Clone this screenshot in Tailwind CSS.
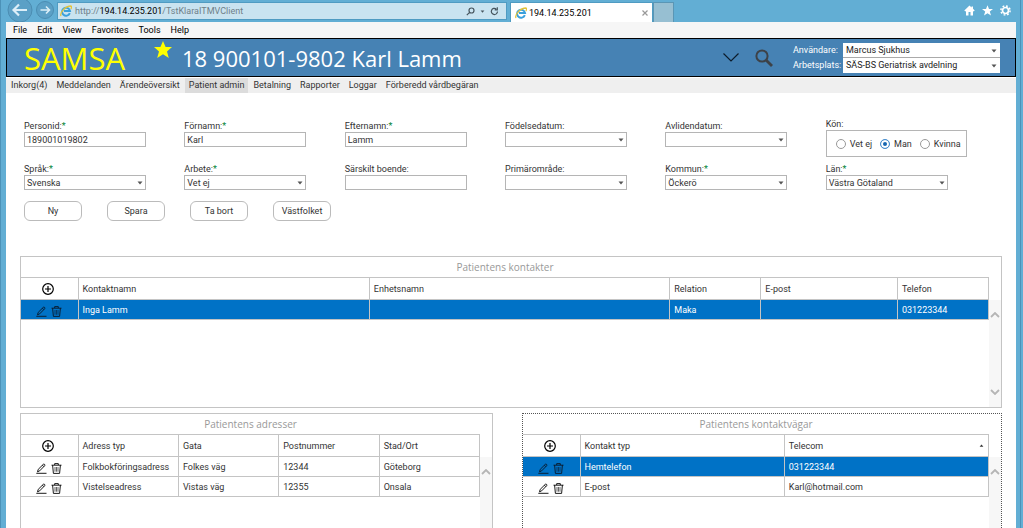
<!DOCTYPE html>
<html lang="sv">
<head>
    <meta charset="UTF-8">
    <meta name="viewport" content="width=device-width, initial-scale=1.0">
    <title>SAMSA - Patient admin</title>
    <script src="https://cdn.jsdelivr.net/npm/@tailwindcss/browser@4"></script>
</head>
<body class="h-screen overflow-hidden bg-[#62aed4] pr-[2px] font-[Roboto,sans-serif] text-[9px] leading-3 text-[#333]">

    <!-- Shared icons -->
    <svg class="hidden">
        <symbol id="ie" viewBox="0 0 12 12">
            <path d="M9.8 8.2A4 4 0 1 1 10 6H4" fill="none" stroke="#3aa0dc" stroke-width="2"/>
            <path d="M1 11C-.5 8 5 1 11 1c1 .5 .6 2-.2 3" fill="none" stroke="#e3c33a" stroke-width="1.3"/>
        </symbol>
        <symbol id="caret" viewBox="0 0 6 4"><path d="M.5 .5h5L3 3.5z" fill="currentColor"/></symbol>
        <symbol id="plus" viewBox="0 0 12 12">
            <path d="M6 .7a5.3 5.3 0 1 1 0 10.6a5.3 5.3 0 0 1 0-10.6zM6 3v6M3 6h6" fill="none" stroke="currentColor" stroke-width="1.2"/>
        </symbol>
        <symbol id="pen" viewBox="0 0 11 11">
            <path d="M1.5 8.8L2.2 6.4 7.3 1.3a1 1 0 0 1 1.4 1.4L3.6 7.9zM6.4 2.2l1.4 1.4M.3 10.3H10.5" fill="none" stroke="currentColor" stroke-width=".9"/>
        </symbol>
        <symbol id="bin" viewBox="0 0 11 11">
            <path d="M.5 2.2h10M3.7 2V.6h3.6V2M1.6 2.2l.8 8.2h6.2l.8-8.2" fill="none" stroke="currentColor" stroke-width=".9"/>
            <path d="M4 4v4.7M5.5 4v4.7M7 4v4.7" fill="none" stroke="currentColor" stroke-width=".6"/>
        </symbol>
        <symbol id="up" viewBox="0 0 10 6"><path d="M1 5l4-4 4 4" fill="none" stroke="currentColor" stroke-width="1.8"/></symbol>
        <symbol id="down" viewBox="0 0 10 6"><path d="M1 1l4 4 4-4" fill="none" stroke="currentColor" stroke-width="1.8"/></symbol>
    </svg>

    <div class="flex h-full flex-col border-x border-[#4c92b8] pl-[5px] pr-[4px]">

        <!-- Browser chrome -->
        <div class="flex h-[22px] shrink-0 items-end">
            <button aria-label="Back" class="flex h-[22px] w-[27px] items-center justify-center">
                <svg class="size-[26px]" viewBox="0 0 26 26"><circle cx="13" cy="12" r="12" fill="#5ba0c6" stroke="#4b8db2"/><path d="M20 12H7M12 6.5L6.5 12l5.5 5.5" fill="none" stroke="#dceef8" stroke-width="2.2"/></svg>
            </button>
            <button aria-label="Forward" class="flex h-[22px] w-[24px] items-center justify-center">
                <svg class="size-[20px]" viewBox="0 0 20 20"><circle cx="10" cy="9" r="8.5" fill="#5ba0c6" stroke="#4b8db2"/><path d="M5.5 9h9M11 5.5l3.5 3.5-3.5 3.5" fill="none" stroke="#dceef8" stroke-width="1.6"/></svg>
            </button>
            <div class="mb-[2px] flex h-[18px] w-[450px] items-center border border-[#4f9bc2] bg-[#c9e3f0] px-[2px]">
                <svg class="size-[12px]"><use href="#ie"/></svg>
                <div role="textbox" aria-label="Address" class="ml-[3px] flex-1 whitespace-nowrap text-[#6f7f88]">http://<span class="text-black">194.14.235.201</span>/TstKlaraITMVClient</div>
                <button aria-label="Search"><svg class="size-[9px]" viewBox="0 0 9 9"><path d="M.8 8.2L3.6 5.4M5.5 1a2.5 2.5 0 1 1 0 5a2.5 2.5 0 0 1 0-5z" fill="none" stroke="#46555e" stroke-width="1.2"/></svg></button>
                <svg class="ml-[5px] h-[3px] w-[5px] text-[#46555e]"><use href="#caret"/></svg>
                <button aria-label="Refresh" class="mx-[5px]"><svg class="size-[9px]" viewBox="0 0 9 9"><path d="M7.5 4.5a3.1 3.1 0 1 1-1.3-2.6M7.3 .3v2.6H4.7" fill="none" stroke="#46555e" stroke-width="1.2"/></svg></button>
            </div>
            <div class="ml-[3px] flex h-[20px] w-[143px] items-center border border-b-0 border-[#4f9bc2] bg-white px-[4px]">
                <svg class="size-[12px]"><use href="#ie"/></svg>
                <span class="ml-[2px] flex-1 text-black">194.14.235.201</span>
                <button aria-label="Close tab"><svg class="size-[6px]" viewBox="0 0 6 6"><path d="M.5 .5l5 5M5.5 .5l-5 5" stroke="#999" stroke-width="1.2"/></svg></button>
            </div>
            <button aria-label="New tab" class="h-[20px] w-[21px] border border-b-0 border-[#5a96b5] bg-[#97bfd2]"></button>
            <div class="ml-auto flex gap-[7px] pb-[6px] pr-[5px] text-white">
                <button aria-label="Home"><svg class="size-[11px]" viewBox="0 0 11 11"><path d="M5.5 .5L.3 5.5l1 1 .7-.6V10.5h2.5V7h2v3.5H9V5.9l.7.6 1-1L9 3.8V1.5H7.5v.9z" fill="currentColor"/></svg></button>
                <button aria-label="Favorites"><svg class="size-[11px]" viewBox="0 0 11 11"><path d="M5.5 .2L7 4h4L7.8 6.5 9 10.6 5.5 8.2 2 10.6 3.2 6.5 0 4h4z" fill="currentColor"/></svg></button>
                <button aria-label="Settings"><svg class="size-[11px]" viewBox="0 0 11 11"><circle cx="5.5" cy="5.5" r="3" fill="none" stroke="currentColor" stroke-width="1.7"/><circle cx="5.5" cy="5.5" r="4.6" fill="none" stroke="currentColor" stroke-width="1.5" stroke-dasharray="1.8 1.813"/></svg></button>
            </div>
        </div>

        <div class="flex min-h-0 flex-1 flex-col bg-white">
            <!-- Browser menu -->
            <div class="flex h-[16px] shrink-0 items-center gap-[10px] bg-[#f6f6f6] pl-[7px] text-black">
                <button>File</button>
                <button>Edit</button>
                <button>View</button>
                <button>Favorites</button>
                <button>Tools</button>
                <button>Help</button>
            </div>

            <!-- Patient header -->
            <header class="flex h-[39px] shrink-0 items-center border border-black bg-[#4682b4] pl-[17px] pr-[15px] text-white">
                <div class="w-[130px] font-['Open_Sans',sans-serif] text-[31px] leading-9 text-[#ffff00]">SAMSA</div>
                <svg class="mb-4 size-[18px]" viewBox="0 0 18 18"><path d="M9 0l2.6 6H18l-5 4.5L14.8 17 9 13.3 3.2 17 5 10.5 0 6h6.4z" fill="#ffff00"/></svg>
                <h1 class="ml-[10px] flex-1 whitespace-nowrap font-['Open_Sans',sans-serif] text-[22px] leading-8">18 900101-9802 Karl Lamm</h1>
                <button aria-label="Expand"><svg class="h-[9px] w-[16px]" viewBox="0 0 16 9"><path d="M.5 .5L8 8 15.5 .5" fill="none" stroke="#0c1c2c" stroke-width="1.2"/></svg></button>
                <button aria-label="Search patient" class="ml-[16px]"><svg class="size-[18px]" viewBox="0 0 18 18"><circle cx="7" cy="7" r="5.6" fill="none" stroke="#3d4248" stroke-width="2"/><path d="M11 11l6 6" stroke="#3d4248" stroke-width="2.8"/></svg></button>
                <div class="ml-[20px] grid grid-cols-[50px_157px] items-center">
                    <label for="user">Användare:</label>
                    <div class="relative text-[#222]">
                        <select id="user" class="block h-[15px] w-full appearance-none border-b border-[#aaa] bg-white pl-[3px]"><option>Marcus Sjukhus</option></select>
                        <svg class="pointer-events-none absolute right-[3px] top-[6px] h-[4px] w-[6px] text-[#555]"><use href="#caret"/></svg>
                    </div>
                    <label for="place">Arbetsplats:</label>
                    <div class="relative text-[#222]">
                        <select id="place" class="block h-[15px] w-full appearance-none bg-white pl-[3px]"><option>SÄS-BS Geriatrisk avdelning</option></select>
                        <svg class="pointer-events-none absolute right-[3px] top-[6px] h-[4px] w-[6px] text-[#555]"><use href="#caret"/></svg>
                    </div>
                </div>
            </header>

            <!-- Tabs -->
            <nav class="mt-px flex h-[15px] shrink-0 gap-px bg-[#efefef] pl-px leading-[15px]">
                <a href="#" class="px-[4px]">Inkorg(4)</a>
                <a href="#" class="px-[4px]">Meddelanden</a>
                <a href="#" class="px-[4px]">Ärendeöversikt</a>
                <a href="#" class="bg-[#dcdcdc] px-[4px]">Patient admin</a>
                <a href="#" class="px-[4px]">Betalning</a>
                <a href="#" class="px-[4px]">Rapporter</a>
                <a href="#" class="px-[4px]">Loggar</a>
                <a href="#" class="px-[4px]">Förberedd vårdbegäran</a>
            </nav>

            <main class="flex min-h-0 flex-1 flex-col px-[14px] pt-[27px]">
                <form class="pl-[4px] pr-[16px]">
                    <div class="grid h-[86px] grid-cols-6 grid-rows-2">
                        <div class="w-[122px]">
                            <label for="pid">Personid:<span class="text-green-700">*</span></label>
                            <input id="pid" value="189001019802" class="block h-[15px] w-full border border-[#b5b5b5] px-[2px]">
                        </div>
                        <div class="w-[122px]">
                            <label for="fname">Förnamn:<span class="text-green-700">*</span></label>
                            <input id="fname" value="Karl" class="block h-[15px] w-full border border-[#b5b5b5] px-[2px]">
                        </div>
                        <div class="w-[122px]">
                            <label for="lname">Efternamn:<span class="text-green-700">*</span></label>
                            <input id="lname" value="Lamm" class="block h-[15px] w-full border border-[#b5b5b5] px-[2px]">
                        </div>
                        <div class="relative w-[122px]">
                            <label for="born">Födelsedatum:</label>
                            <select id="born" class="block h-[15px] w-full appearance-none border border-[#b5b5b5] px-[2px]"><option></option></select>
                            <svg class="pointer-events-none absolute right-[3px] top-[18px] h-[4px] w-[6px] text-[#555]"><use href="#caret"/></svg>
                        </div>
                        <div class="relative w-[122px]">
                            <label for="dead">Avlidendatum:</label>
                            <select id="dead" class="block h-[15px] w-full appearance-none border border-[#b5b5b5] px-[2px]"><option></option></select>
                            <svg class="pointer-events-none absolute right-[3px] top-[18px] h-[4px] w-[6px] text-[#555]"><use href="#caret"/></svg>
                        </div>
                        <fieldset class="-mt-[2px] w-[141px]">
                            <legend>Kön:</legend>
                            <div class="flex h-[27px] items-center justify-center gap-[8px] border border-[#b5b5b5] pl-[4px]">
                                <label class="flex items-center gap-[4px]"><input type="radio" name="sex" class="size-[10px] appearance-none rounded-full border border-[#999] bg-white">Vet ej</label>
                                <label class="flex items-center gap-[4px]"><input type="radio" name="sex" checked class="size-[10px] appearance-none rounded-full border border-[#4a90d0] bg-[#1766b0] ring-2 ring-inset ring-white">Man</label>
                                <label class="flex items-center gap-[4px]"><input type="radio" name="sex" class="size-[10px] appearance-none rounded-full border border-[#999] bg-white">Kvinna</label>
                            </div>
                        </fieldset>
                        <div class="relative w-[122px]">
                            <label for="lang">Språk:<span class="text-green-700">*</span></label>
                            <select id="lang" class="block h-[15px] w-full appearance-none border border-[#b5b5b5] px-[2px]"><option>Svenska</option></select>
                            <svg class="pointer-events-none absolute right-[3px] top-[18px] h-[4px] w-[6px] text-[#555]"><use href="#caret"/></svg>
                        </div>
                        <div class="relative w-[122px]">
                            <label for="work">Arbete:<span class="text-green-700">*</span></label>
                            <select id="work" class="block h-[15px] w-full appearance-none border border-[#b5b5b5] px-[2px]"><option>Vet ej</option></select>
                            <svg class="pointer-events-none absolute right-[3px] top-[18px] h-[4px] w-[6px] text-[#555]"><use href="#caret"/></svg>
                        </div>
                        <div class="w-[122px]">
                            <label for="home">Särskilt boende:</label>
                            <input id="home" class="block h-[15px] w-full border border-[#b5b5b5] px-[2px]">
                        </div>
                        <div class="relative w-[122px]">
                            <label for="area">Primärområde:</label>
                            <select id="area" class="block h-[15px] w-full appearance-none border border-[#b5b5b5] px-[2px]"><option></option></select>
                            <svg class="pointer-events-none absolute right-[3px] top-[18px] h-[4px] w-[6px] text-[#555]"><use href="#caret"/></svg>
                        </div>
                        <div class="relative w-[122px]">
                            <label for="kommun">Kommun:<span class="text-green-700">*</span></label>
                            <select id="kommun" class="block h-[15px] w-full appearance-none border border-[#b5b5b5] px-[2px]"><option>Öckerö</option></select>
                            <svg class="pointer-events-none absolute right-[3px] top-[18px] h-[4px] w-[6px] text-[#555]"><use href="#caret"/></svg>
                        </div>
                        <div class="relative w-[122px]">
                            <label for="lan">Län:<span class="text-green-700">*</span></label>
                            <select id="lan" class="block h-[15px] w-full appearance-none border border-[#b5b5b5] px-[2px]"><option>Västra Götaland</option></select>
                            <svg class="pointer-events-none absolute right-[3px] top-[18px] h-[4px] w-[6px] text-[#555]"><use href="#caret"/></svg>
                        </div>
                    </div>
                    <div class="-mt-[5px] flex gap-[25px]">
                        <button type="button" class="h-[20px] w-[58px] rounded-[6px] border border-[#bbb]">Ny</button>
                        <button type="button" class="h-[20px] w-[58px] rounded-[6px] border border-[#bbb]">Spara</button>
                        <button type="button" class="h-[20px] w-[58px] rounded-[6px] border border-[#bbb]">Ta bort</button>
                        <button type="button" class="h-[20px] w-[58px] rounded-[6px] border border-[#bbb]">Västfolket</button>
                    </div>
                </form>

                <!-- Contacts -->
                <section class="mt-[35px] flex h-[152px] shrink-0 border border-[#c4c4c4]">
                    <div class="min-w-0 flex-1">
                        <h2 class="h-[20px] text-center font-['Open_Sans',sans-serif] text-[10px] leading-5 text-[#999]">Patientens kontakter</h2>
                        <table class="w-full table-fixed border-collapse text-left">
                            <colgroup><col class="w-[57px]"><col class="w-[32%]"><col class="w-[33%]"><col class="w-[10%]"><col class="w-[15%]"><col class="w-[10%]"></colgroup>
                            <thead>
                                <tr class="h-[22px] border-y border-[#c4c4c4]">
                                    <th class="border-r border-[#c4c4c4] pr-[2px] text-black"><button aria-label="Lägg till kontakt" class="mx-auto block"><svg class="size-[12px]"><use href="#plus"/></svg></button></th>
                                    <th class="border-r border-[#c4c4c4] pl-[4px] font-normal">Kontaktnamn</th>
                                    <th class="border-r border-[#c4c4c4] pl-[4px] font-normal">Enhetsnamn</th>
                                    <th class="border-r border-[#c4c4c4] pl-[4px] font-normal">Relation</th>
                                    <th class="border-r border-[#c4c4c4] pl-[4px] font-normal">E-post</th>
                                    <th class="border-r border-[#c4c4c4] pl-[4px] font-normal">Telefon</th>
                                </tr>
                            </thead>
                            <tbody>
                                <tr class="h-[20px] border-b border-[#c4c4c4] bg-[#0072c6] text-white">
                                    <td class="border-r border-[#c4c4c4] text-[#0a1626]"><div class="flex justify-center gap-[4px] pt-[3px]"><button aria-label="Redigera"><svg class="size-[11px]"><use href="#pen"/></svg></button><button aria-label="Ta bort"><svg class="size-[11px]"><use href="#bin"/></svg></button></div></td>
                                    <td class="border-r border-[#c4c4c4] pl-[4px]">Inga Lamm</td>
                                    <td class="border-r border-[#c4c4c4] pl-[4px]"></td>
                                    <td class="border-r border-[#c4c4c4] pl-[4px]">Maka</td>
                                    <td class="border-r border-[#c4c4c4] pl-[4px]"></td>
                                    <td class="border-r border-[#c4c4c4] pl-[4px]">031223344</td>
                                </tr>
                            </tbody>
                        </table>
                    </div>
                    <div class="mt-[43px] flex w-[12px] flex-col items-center justify-between bg-[#f7f7f7] py-[12px] text-[#b5b5b5]">
                        <svg class="h-[6px] w-[10px]"><use href="#up"/></svg>
                        <svg class="h-[6px] w-[10px]"><use href="#down"/></svg>
                    </div>
                </section>

                <div class="mt-[5px] flex min-h-0 flex-1 gap-[29px]">
                    <!-- Addresses -->
                    <section class="flex flex-[473] border border-b-0 border-[#c4c4c4]">
                        <div class="min-w-0 flex-1">
                            <h2 class="h-[20px] text-center font-['Open_Sans',sans-serif] text-[10px] leading-5 text-[#999]">Patientens adresser</h2>
                            <table class="w-full table-fixed border-collapse text-left">
                                <colgroup><col class="w-[57px]"><col><col><col><col></colgroup>
                                <thead>
                                    <tr class="h-[22px] border-y border-[#c4c4c4]">
                                        <th class="border-r border-[#c4c4c4] pr-[2px] text-black"><button aria-label="Lägg till adress" class="mx-auto block"><svg class="size-[12px]"><use href="#plus"/></svg></button></th>
                                        <th class="border-r border-[#c4c4c4] pl-[4px] font-normal">Adress typ</th>
                                        <th class="border-r border-[#c4c4c4] pl-[4px] font-normal">Gata</th>
                                        <th class="border-r border-[#c4c4c4] pl-[4px] font-normal">Postnummer</th>
                                        <th class="border-r border-[#c4c4c4] pl-[4px] font-normal">Stad/Ort</th>
                                    </tr>
                                </thead>
                                <tbody>
                                    <tr class="h-[20px] border-b border-[#c4c4c4]">
                                        <td class="border-r border-[#c4c4c4] text-black"><div class="flex justify-center gap-[4px] pt-[3px]"><button aria-label="Redigera"><svg class="size-[11px]"><use href="#pen"/></svg></button><button aria-label="Ta bort"><svg class="size-[11px]"><use href="#bin"/></svg></button></div></td>
                                        <td class="border-r border-[#c4c4c4] pl-[4px]">Folkbokföringsadress</td>
                                        <td class="border-r border-[#c4c4c4] pl-[4px]">Folkes väg</td>
                                        <td class="border-r border-[#c4c4c4] pl-[4px]">12344</td>
                                        <td class="border-r border-[#c4c4c4] pl-[4px]">Göteborg</td>
                                    </tr>
                                    <tr class="h-[20px] border-b border-[#c4c4c4]">
                                        <td class="border-r border-[#c4c4c4] text-black"><div class="flex justify-center gap-[4px] pt-[3px]"><button aria-label="Redigera"><svg class="size-[11px]"><use href="#pen"/></svg></button><button aria-label="Ta bort"><svg class="size-[11px]"><use href="#bin"/></svg></button></div></td>
                                        <td class="border-r border-[#c4c4c4] pl-[4px]">Vistelseadress</td>
                                        <td class="border-r border-[#c4c4c4] pl-[4px]">Vistas väg</td>
                                        <td class="border-r border-[#c4c4c4] pl-[4px]">12355</td>
                                        <td class="border-r border-[#c4c4c4] pl-[4px]">Onsala</td>
                                    </tr>
                                </tbody>
                            </table>
                        </div>
                        <div class="mt-[43px] flex w-[12px] flex-col items-center bg-[#f7f7f7] pt-[12px] text-[#b5b5b5]">
                            <svg class="h-[6px] w-[10px]"><use href="#up"/></svg>
                        </div>
                    </section>

                    <!-- Contact channels -->
                    <section class="flex flex-[480] border border-b-0 border-dotted border-[#555]">
                        <div class="min-w-0 flex-1">
                            <h2 class="h-[20px] text-center font-['Open_Sans',sans-serif] text-[10px] leading-5 text-[#999]">Patientens kontaktvägar</h2>
                            <table class="w-full table-fixed border-collapse text-left">
                                <colgroup><col class="w-[57px]"><col><col></colgroup>
                                <thead>
                                    <tr class="h-[22px] border-y border-[#c4c4c4]">
                                        <th class="border-r border-[#c4c4c4] pr-[2px] text-black"><button aria-label="Lägg till kontaktväg" class="mx-auto block"><svg class="size-[12px]"><use href="#plus"/></svg></button></th>
                                        <th class="border-r border-[#c4c4c4] pl-[4px] font-normal">Kontakt typ</th>
                                        <th class="border-r border-[#c4c4c4] pl-[4px] font-normal"><div class="flex items-center justify-between pr-[4px]">Telecom<svg class="h-[3px] w-[5px] rotate-180"><use href="#caret"/></svg></div></th>
                                    </tr>
                                </thead>
                                <tbody>
                                    <tr class="h-[20px] border-b border-[#c4c4c4] bg-[#0072c6] text-white">
                                        <td class="border-r border-[#c4c4c4] text-[#0a1626]"><div class="flex justify-center gap-[4px] pt-[3px]"><button aria-label="Redigera"><svg class="size-[11px]"><use href="#pen"/></svg></button><button aria-label="Ta bort"><svg class="size-[11px]"><use href="#bin"/></svg></button></div></td>
                                        <td class="border-r border-[#c4c4c4] pl-[4px]">Hemtelefon</td>
                                        <td class="border-r border-[#c4c4c4] pl-[4px]">031223344</td>
                                    </tr>
                                    <tr class="h-[20px] border-b border-[#c4c4c4]">
                                        <td class="border-r border-[#c4c4c4] text-black"><div class="flex justify-center gap-[4px] pt-[3px]"><button aria-label="Redigera"><svg class="size-[11px]"><use href="#pen"/></svg></button><button aria-label="Ta bort"><svg class="size-[11px]"><use href="#bin"/></svg></button></div></td>
                                        <td class="border-r border-[#c4c4c4] pl-[4px]">E-post</td>
                                        <td class="border-r border-[#c4c4c4] pl-[4px]">Karl@hotmail.com</td>
                                    </tr>
                                </tbody>
                            </table>
                        </div>
                        <div class="mt-[43px] flex w-[12px] flex-col items-center bg-[#f7f7f7] pt-[12px] text-[#b5b5b5]">
                            <svg class="h-[6px] w-[10px]"><use href="#up"/></svg>
                        </div>
                    </section>
                </div>
            </main>
        </div>
    </div>

</body>
</html>
